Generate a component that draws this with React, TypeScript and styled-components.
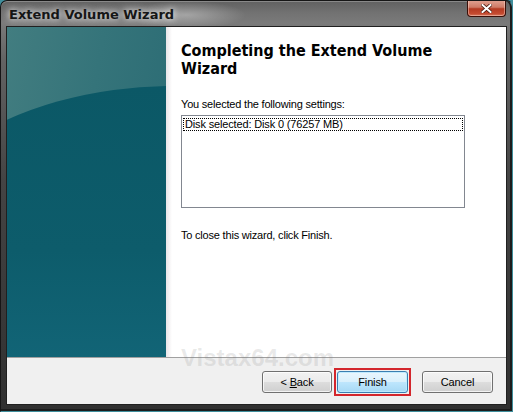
import React from "react";
import styled, { createGlobalStyle } from "styled-components";

const GlobalStyle = createGlobalStyle`
  html, body {
    margin: 0;
    padding: 0;
    background: #3f8e9c;
  }
  body {
    font-family: "Liberation Sans", Arial, sans-serif;
  }
`;

const Window = styled.div`
  position: relative;
  width: 513px;
  height: 412px;
  box-sizing: border-box;
  display: flex;
  flex-direction: column;
  border: 1px solid #161616;
  border-bottom-color: #3f8e9c;
  border-right-color: #3f8e9c;
  border-radius: 7px 7px 0 0;
  overflow: hidden;
  background:
    radial-gradient(ellipse 60px 14px at 185px 14px, rgba(255, 255, 255, 0.35), transparent),
    linear-gradient(180deg, #616161 0px, #727272 12px, #7a7a7a 22px, #636363 60px, #444 180px, #303030 100%);
  box-shadow: inset 0 -2px 0 #1c1c1c, inset -2px 0 0 #1c1c1c, inset 0 1px 0 rgba(255, 255, 255, 0.25);
`;

const TitleBar = styled.div`
  height: 25px;
  display: flex;
  align-items: flex-start;
  justify-content: space-between;
  padding-left: 8px;
`;

const TitleText = styled.div`
  margin-top: 6px;
  font-family: "DejaVu Sans", Verdana, sans-serif;
  font-weight: bold;
  font-size: 13px;
  line-height: 15px;
  color: #161616;
  text-shadow: 0 0 6px rgba(255, 255, 255, 0.9), 0 0 12px rgba(255, 255, 255, 0.6);
`;

const CloseButton = styled.div`
  width: 39px;
  height: 17px;
  margin-top: -1px;
  margin-right: 6px;
  box-sizing: border-box;
  display: flex;
  align-items: center;
  justify-content: center;
  border: 1px solid #3a0f08;
  border-top: none;
  border-radius: 0 0 4px 4px;
  background: linear-gradient(180deg, #e2a494 0%, #cf7b67 45%, #b43a22 55%, #c44a30 85%, #d6785e 100%);
  box-shadow: inset 0 0 0 1px rgba(255, 220, 210, 0.45);
`;

const Client = styled.div`
  flex: 1;
  margin: 0 5px 6px 5px;
  display: flex;
  flex-direction: column;
  border: 1px solid #202020;
`;

const Body = styled.div`
  height: 330px;
  display: flex;
`;

const SidePanel = styled.div`
  position: relative;
  width: 159px;
  overflow: hidden;
  background: linear-gradient(100deg, #427d80 0%, #35747a 45%, #296a73 100%);

  &::after {
    content: "";
    position: absolute;
    left: -135px;
    top: 59px;
    width: 600px;
    height: 410px;
    border-radius: 50%;
    background: linear-gradient(180deg, #0b5866 0%, #0d5c6b 40%, #13677a 75%, #176c80 100%);
  }
`;

const Content = styled.div`
  flex: 1;
  padding: 15px 0 0 15px;
  background: linear-gradient(90deg, #e9e5e8 0px, #ffffff 6px);
`;

const Heading = styled.h1`
  margin: 0;
  font-family: "DejaVu Sans Condensed", "DejaVu Sans", Verdana, sans-serif;
  font-stretch: condensed;
  font-weight: bold;
  font-size: 16px;
  line-height: 18px;
  color: #000;
`;

const Text = styled.p<{ $gap: number }>`
  margin: ${(p) => p.$gap}px 0 0 0;
  font-size: 11px;
  line-height: 13px;
  letter-spacing: -0.2px;
  color: #000;
`;

const ListBox = styled.div`
  margin-top: 4px;
  width: 284px;
  height: 93px;
  box-sizing: border-box;
  border: 1px solid #828790;
  background: #fff;
  padding: 2px 1px 0 1px;
`;

const ListItem = styled.div`
  height: 13px;
  box-sizing: border-box;
  border: 1px dotted #000;
  padding-left: 1px;
  font-size: 11px;
  line-height: 11px;
  letter-spacing: -0.15px;
  color: #000;
`;

const Footer = styled.div`
  flex: 1;
  display: flex;
  align-items: center;
  justify-content: flex-end;
  padding: 2px 13px 0 0;
  background: #f0f0f0;
  border-top: 1px solid #a0a0a0;
`;

const Button = styled.div<{ $primary?: boolean; $w?: number }>`
  width: ${(p) => p.$w ?? 71}px;
  height: 22px;
  box-sizing: border-box;
  display: flex;
  align-items: center;
  justify-content: center;
  border: 1px solid ${(p) => (p.$primary ? "#3c7fb1" : "#707070")};
  border-radius: 3px;
  background: ${(p) =>
    p.$primary
      ? "linear-gradient(180deg, #eaf6fd 0%, #d9f0fc 50%, #bee6fd 51%, #a7d9f5 100%)"
      : "linear-gradient(180deg, #f2f2f2 0%, #ebebeb 50%, #dddddd 51%, #cfcfcf 100%)"};
  box-shadow: inset 0 0 0 1px ${(p) => (p.$primary ? "rgba(190,235,255,0.9)" : "rgba(255,255,255,0.75)")};
  font-size: 11px;
  letter-spacing: -0.15px;
  color: #000;
`;

const FocusMark = styled.div`
  padding: 1px;
  border: 2px solid #d3262c;
  margin: 0 11px 0 2px;
`;

const Watermark = styled.div`
  position: absolute;
  left: 180px;
  top: 345px;
  font-weight: bold;
  font-size: 24px;
  line-height: 24px;
  color: rgba(120, 120, 120, 0.17);
  pointer-events: none;
`;

export default function App() {
  return (
    <>
      <GlobalStyle />
      <Window>
        <TitleBar>
          <TitleText>Extend Volume Wizard</TitleText>
          <CloseButton>
            <svg width="11" height="9" viewBox="0 0 11 9">
              <path
                d="M1.5 1 L9.5 8 M9.5 1 L1.5 8"
                stroke="#4a1a10"
                strokeWidth="3.6"
                strokeLinecap="square"
              />
              <path
                d="M1.5 1 L9.5 8 M9.5 1 L1.5 8"
                stroke="#ffffff"
                strokeWidth="2"
                strokeLinecap="square"
              />
            </svg>
          </CloseButton>
        </TitleBar>
        <Client>
          <Body>
            <SidePanel />
            <Content>
              <Heading>
                Completing the Extend Volume
                <br />
                Wizard
              </Heading>
              <Text $gap={20}>You selected the following settings:</Text>
              <ListBox>
                <ListItem>Disk selected: Disk 0 (76257 MB)</ListItem>
              </ListBox>
              <Text $gap={21}>To close this wizard, click Finish.</Text>
            </Content>
          </Body>
          <Footer>
            <Button $w={70}>
              &lt;&nbsp;<u>B</u>ack
            </Button>
            <FocusMark>
              <Button $primary>Finish</Button>
            </FocusMark>
            <Button>Cancel</Button>
          </Footer>
        </Client>
        <Watermark>Vistax64.com</Watermark>
      </Window>
    </>
  );
}
